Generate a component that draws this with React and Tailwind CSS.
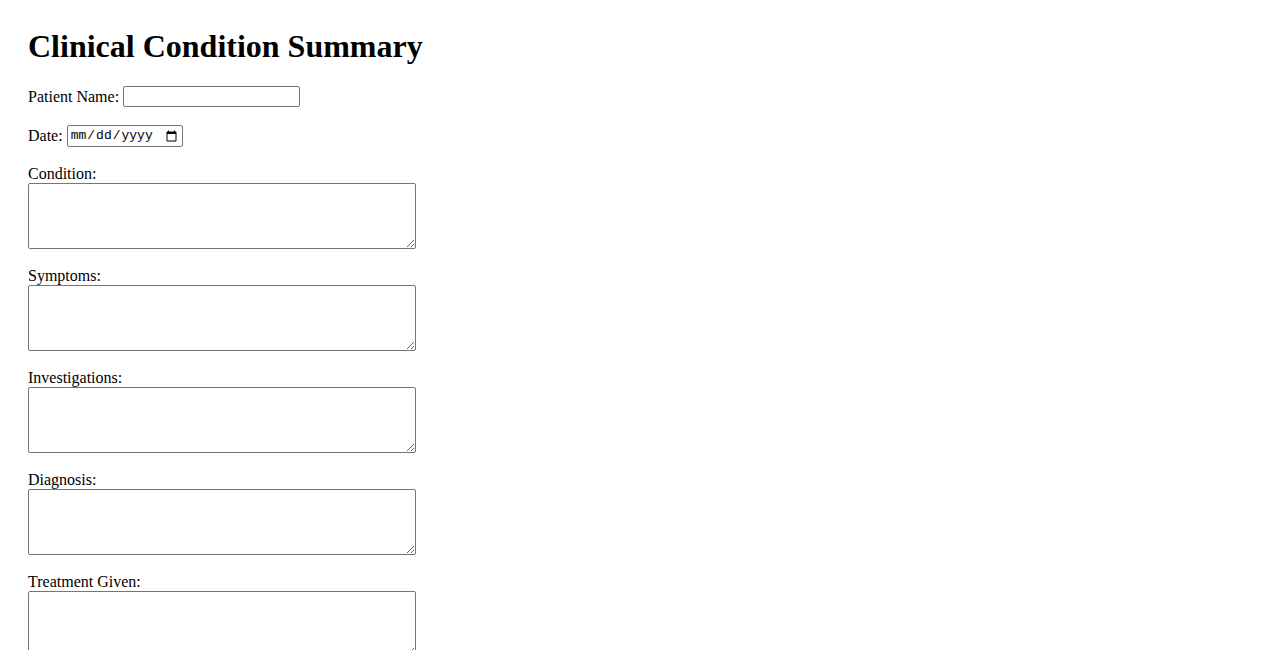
import React from 'react';

const fields = ['Condition', 'Symptoms', 'Investigations', 'Diagnosis', 'Treatment Given'];

export default function App() {
  return (
    <div className="min-h-screen bg-white pl-[28px] pt-[28px] text-black font-['Liberation_Serif',serif]">
      <h1 className="text-[32px] leading-[37px] font-bold">Clinical Condition Summary</h1>

      <div className="mt-[21px] flex items-center gap-[4px] text-[16px] leading-[18px]">
        <label htmlFor="patient">Patient Name:</label>
        <input
          id="patient"
          type="text"
          className="h-[21px] w-[177px] rounded-[2px] border border-[#767676] bg-white px-[2px] text-[13px] font-['Liberation_Sans',sans-serif]"
        />
      </div>

      <div className="mt-[18px] flex items-center gap-[4px] text-[16px] leading-[18px]">
        <label htmlFor="date">Date:</label>
        <input
          id="date"
          type="date"
          className="h-[22px] w-[116px] rounded-[2px] border border-[#767676] bg-white px-[2px] text-[13px] font-['Liberation_Mono',monospace]"
        />
      </div>

      {fields.map((f) => (
        <div key={f} className="mt-[18px] flex flex-col items-start">
          <label className="text-[16px] leading-[18px]">{f}:</label>
          <textarea className="h-[66px] w-[388px] rounded-[2px] border border-[#767676] bg-white p-[2px] text-[13px] font-['Liberation_Mono',monospace]" />
        </div>
      ))}
    </div>
  );
}
